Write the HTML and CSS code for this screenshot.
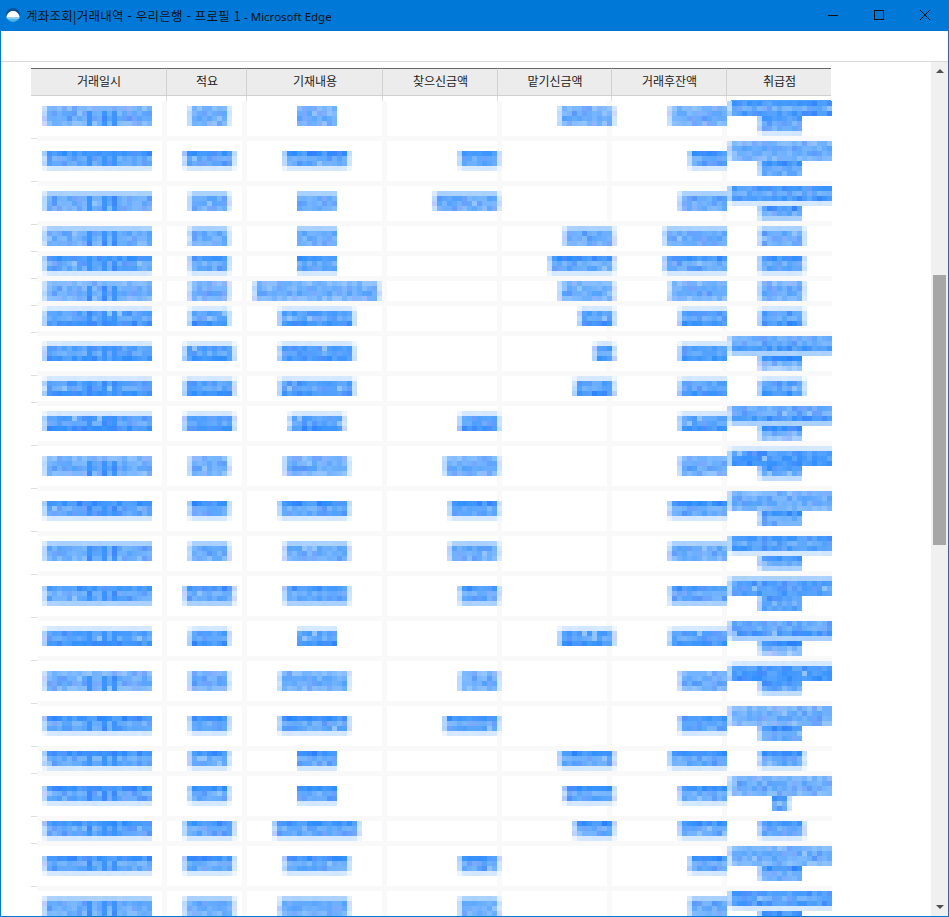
FILE: index.html
```html
<!DOCTYPE html>
<html lang="ko">
<head>
<meta charset="utf-8">
<title>계좌조회|거래내역 - 우리은행 - 프로필 1 - Microsoft Edge</title>
<link rel="stylesheet" href="styles.css">
</head>
<body>
<div class="window">
  <header class="titlebar">
    <svg class="app-icon" viewBox="0 0 14 14" aria-hidden="true">
      <defs><clipPath id="disc"><circle cx="7" cy="7" r="7"/></clipPath></defs>
      <g clip-path="url(#disc)">
        <rect width="14" height="14" fill="#0b4f96"/>
        <path d="M0 9.500C1.500 4.500 4 3 7 3s5.500 1.500 7 6.500z" fill="#fff"/>
        <rect y="9.500" width="14" height="5" fill="#49b4ea"/>
        <rect y="9.500" width="14" height="1" fill="#cfeefc"/>
      </g>
    </svg>
    <span class="title-text"><span class="title-ko">계좌조회|거래내역 - 우리은행 - 프로필 1</span> - Microsoft Edge</span>
    <div class="controls">
      <svg class="control" viewBox="0 0 46 30" aria-hidden="true"><path d="M18 14.500h10" stroke="#111" fill="none"/></svg>
      <svg class="control" viewBox="0 0 46 30" aria-hidden="true"><rect x="18.500" y="9.500" width="9" height="9" stroke="#111" fill="none"/></svg>
      <svg class="control" viewBox="0 0 46 30" aria-hidden="true"><path d="M18 9l10 10M28 9L18 19" stroke="#111" fill="none"/></svg>
    </div>
  </header>
  <div class="addressbar"></div>
  <div class="viewport">
    <main class="page">
      <table class="ledger">
        <colgroup>
          <col class="w-date"><col class="w-brief"><col class="w-memo"><col class="w-in"><col class="w-out"><col class="w-bal"><col class="w-branch">
        </colgroup>
        <thead>
          <tr><th>거래일시</th><th>적요</th><th>기재내용</th><th>찾으신금액</th><th>맡기신금액</th><th>거래후잔액</th><th>취급점</th></tr>
        </thead>
        <tbody id="rows"></tbody>
      </table>
      <canvas id="mosaic" class="mosaic" width="795" height="817"></canvas>
    </main>
    <aside class="scrollbar">
      <span class="arrow arrow-up"></span>
      <div class="track"><div class="thumb"></div></div>
      <span class="arrow arrow-down"></span>
    </aside>
  </div>
</div>
<script src="script.js"></script>
</body>
</html>
```
FILE: styles.css
```css
* { box-sizing: border-box; }
html, body { margin: 0; padding: 0; background: #fff; overflow: hidden; }
.window {
  width: 949px; height: 917px;
  display: flex; flex-direction: column;
  border: 1px solid #0078d7;
  background: #fff;
  font-family: "Noto Sans", "Noto Sans CJK KR", sans-serif;
}
.titlebar {
  height: 30px; flex: none;
  display: flex; align-items: center;
  background: #0078d7;
  color: #111;
  padding-left: 5px;
}
.app-icon { width: 14px; height: 14px; flex: none; margin: 0 6px 2px 0; }
.title-text { font-size: 11.500px; line-height: 30px; white-space: nowrap; font-family: "Noto Sans", sans-serif; }
.title-ko { font-size: 12.500px; letter-spacing: .25px; font-family: "Noto Sans CJK KR", sans-serif; }
.controls { margin-left: auto; display: flex; }
.control { width: 46px; height: 30px; display: block; }
.addressbar { height: 31px; flex: none; background: #fff; border-bottom: 1px solid #d9d9d9; }
.viewport { flex: 1; min-height: 0; display: flex; }
.page { flex: 1; min-width: 0; position: relative; overflow: hidden; padding: 6px 0 0 30px; }
.ledger { width: 800px; table-layout: fixed; border-collapse: separate; border-spacing: 0; }
.w-date { width: 136px; } .w-brief { width: 80px; } .w-memo { width: 136px; }
.w-in { width: 115px; } .w-out { width: 114px; } .w-bal { width: 115px; } .w-branch { width: 104px; }
.ledger th {
  height: 28px; padding: 0 0 3px 1px;
  background: #ececec;
  border-top: 1px solid #666;
  border-bottom: 1px solid #d0d0d0;
  border-right: 1px solid #d0d0d0;
  font-size: 12px; font-weight: 400; color: #222; text-align: center;
  font-family: "Noto Sans CJK KR", sans-serif;
}
.ledger th:last-child { border-right: 0; }
.ledger td { padding: 0; border-bottom: 1px solid #ddd; border-right: 1px solid #ddd; }
.ledger td:last-child { border-right: 0; }
.row-tall td { height: 43px; }
.row-short td { height: 27px; }
.mosaic { position: absolute; left: 36px; top: 38px; display: block; }
.scrollbar { width: 17px; flex: none; background: #f0f0f0; display: flex; flex-direction: column; align-items: center; }
.arrow { width: 0; height: 0; flex: none; border-left: 4px solid transparent; border-right: 4px solid transparent; }
.arrow-up { border-bottom: 4px solid #505050; margin-top: 7px; }
.arrow-down { border-top: 4px solid #505050; margin-bottom: 7px; }
.track { flex: 1; width: 100%; padding-top: 202px; }
.thumb { width: 13px; height: 270px; margin: 0 2px; background: #a6a6a6; }
```
FILE: script.js
```js
// Redacted ledger: every value is covered by a 5px mosaic, as in the capture.
var OX = 37, OY = 100, BLOCK = 5;
var P = {
  A: [.6, .68, .72, .6],
  B: [.9, .7, .74, .2],
  C: [.2, .8, .74, .88],
  D: [.4, .72, .7, .65],
  E: [.85, .68, .74, .4]
};
var BR = {
  1: [[.6, .7, .7, .6], [.9, .7, .7]],
  2: [[.85, .72, .85, .2], [.88, .7, .4]],
  3: [[.2, .85, .85, .9], [.88, .7, .3]],
  4: [[.7, .7, .85, .4], [.95, .62, .45]],
  5: [[.4, .8, .8, .85], [.8, .7, .8]]
};
// top, profile, brief wide?, memo span, withdrawn x, deposited x, balance x, branch [top, profile] or 0
var ROWS = [
  [106, 'A', 0, [297, 337], 0, 557, 667, [101, 0]],
  [151, 'B', 1, [282, 352], 457, 0, 687, [141, 1]],
  [191, 'D', 0, [297, 337], 432, 0, 677, [186, 2]],
  [226, 'D', 0, [297, 337], 0, 562, 662, 0],
  [256, 'B', 0, [297, 337], 0, 547, 662, 0],
  [281, 'A', 0, [252, 382], 0, 557, 667, 0],
  [306, 'C', 0, [277, 357], 0, 577, 677, 0],
  [341, 'C', 1, [277, 357], 0, 592, 677, [336, 4]],
  [376, 'C', 1, [277, 357], 0, 572, 677, 0],
  [411, 'C', 1, [287, 347], 457, 0, 677, [406, 4]],
  [456, 'A', 0, [282, 352], 442, 0, 677, [446, 3]],
  [501, 'B', 0, [277, 352], 447, 0, 667, [491, 1]],
  [541, 'D', 0, [282, 352], 447, 0, 667, [536, 2]],
  [586, 'E', 1, [282, 352], 457, 0, 667, [576, 5]],
  [626, 'C', 0, [297, 337], 0, 557, 667, [621, 4]],
  [671, 'A', 0, [277, 352], 457, 0, 677, [661, 3]],
  [716, 'B', 0, [277, 352], 442, 0, 677, [706, 1]],
  [751, 'B', 0, [297, 337], 0, 557, 667, 0],
  [786, 'B', 0, [297, 337], 0, 562, 677, [776, 1, 1]],
  [821, 'B', 1, [272, 362], 0, 572, 677, 0],
  [856, 'B', 1, [282, 352], 457, 0, 687, [846, 1]],
  [896, 'D', 1, [277, 352], 457, 0, 687, [891, 2]]
];
var SEPS = [136, 181, 221, 251, 276, 301, 331, 371, 401, 441, 486, 531, 571, 616, 656, 701, 746, 771, 816, 841, 886];
var VBANDS = [162, 242, 382, 497, 607, 722];
var HEIGHTS = [43, 43, 43, 27, 27, 27, 27, 43, 27, 43, 43, 43, 43, 43, 43, 43, 43, 27, 43, 27, 43, 43];

var tbody = document.getElementById('rows');
HEIGHTS.forEach(function (h) {
  var tr = document.createElement('tr');
  tr.className = h === 43 ? 'row-tall' : 'row-short';
  for (var i = 0; i < 7; i++) tr.appendChild(document.createElement('td'));
  tbody.appendChild(tr);
});

var seed = 20240611;
function rnd() {
  seed = (seed * 1664525 + 1013904223) >>> 0;
  return seed / 4294967296;
}
var ctx = document.getElementById('mosaic').getContext('2d');
function paint(x, y, a, shift) {
  a = Math.max(.08, Math.min(1, a));
  var r = Math.round(255 - (255 - 43) * a);
  var g = Math.round(255 - (255 - 140) * a) - (shift || 0);
  ctx.fillStyle = 'rgb(' + r + ',' + g + ',255)';
  ctx.fillRect(x - OX, y - OY, BLOCK, BLOCK);
}
// x0..x1 in page px; softL / softR fade the first / last block column.
function span(x0, x1, softL, softR, top, profile, dark) {
  for (var i = 0; i < profile.length; i++) {
    var y = top + i * BLOCK, base = profile[i], quiet = base < .45;
    for (var x = x0; x < x1; x += BLOCK) {
      var a = base, shift = 0;
      if (!quiet) {
        a += (rnd() - .5) * .2;
        var q = rnd();
        if (i > 0 && i < profile.length - 1 && q < .03) a = .52;
        else if (q < .22) shift = 12;
        if (dark && i > 0 && dark.indexOf(x) >= 0) a = .92;
      } else {
        a += (rnd() - .5) * .03;
      }
      if (softL && x === x0) a *= .45;
      if (softR && x + BLOCK >= x1) a *= .32;
      paint(x, y, a, shift);
    }
  }
}

ctx.fillStyle = '#fff';
ctx.fillRect(0, 1, 795, 816);
ctx.fillStyle = '#f9f9f9';
VBANDS.forEach(function (x) { ctx.fillRect(x - OX, 1, 5, 816); });
SEPS.forEach(function (y) { ctx.fillRect(0, y - OY, 795, 5); });
ctx.fillStyle = '#4da0ff';
ctx.fillRect(731 - OX, 0, 100, 1);

ROWS.forEach(function (r) {
  var t = r[0], p = P[r[1]];
  span(42, 152, true, false, t, p, [87, 102, 112]);
  if (r[2]) span(182, 237, true, true, t, p);
  else span(187, 232, true, true, t, p);
  var m = r[3], bare = m[1] - m[0] === 40;
  span(m[0], m[1], !bare, !bare, t, p);
  if (r[4]) span(r[4], 502, true, true, t, p);
  if (r[5]) span(r[5], 617, true, true, t, p);
  span(r[6], 727, true, false, t, p);
  var b = r[7];
  if (!b) {
    span(757, 807, true, true, t, p);
  } else if (b[1] === 0) {
    span(727, 832, true, false, b[0], [.85, .7, .85]);
    span(757, 802, true, false, b[0] + 15, [.85, .7, .7, .2]);
  } else {
    span(727, 832, true, false, b[0], BR[b[1]][0]);
    if (b[2]) span(772, 792, false, true, b[0] + 20, BR[b[1]][1]);
    else span(757, 802, true, false, b[0] + 20, BR[b[1]][1]);
  }
});
```
